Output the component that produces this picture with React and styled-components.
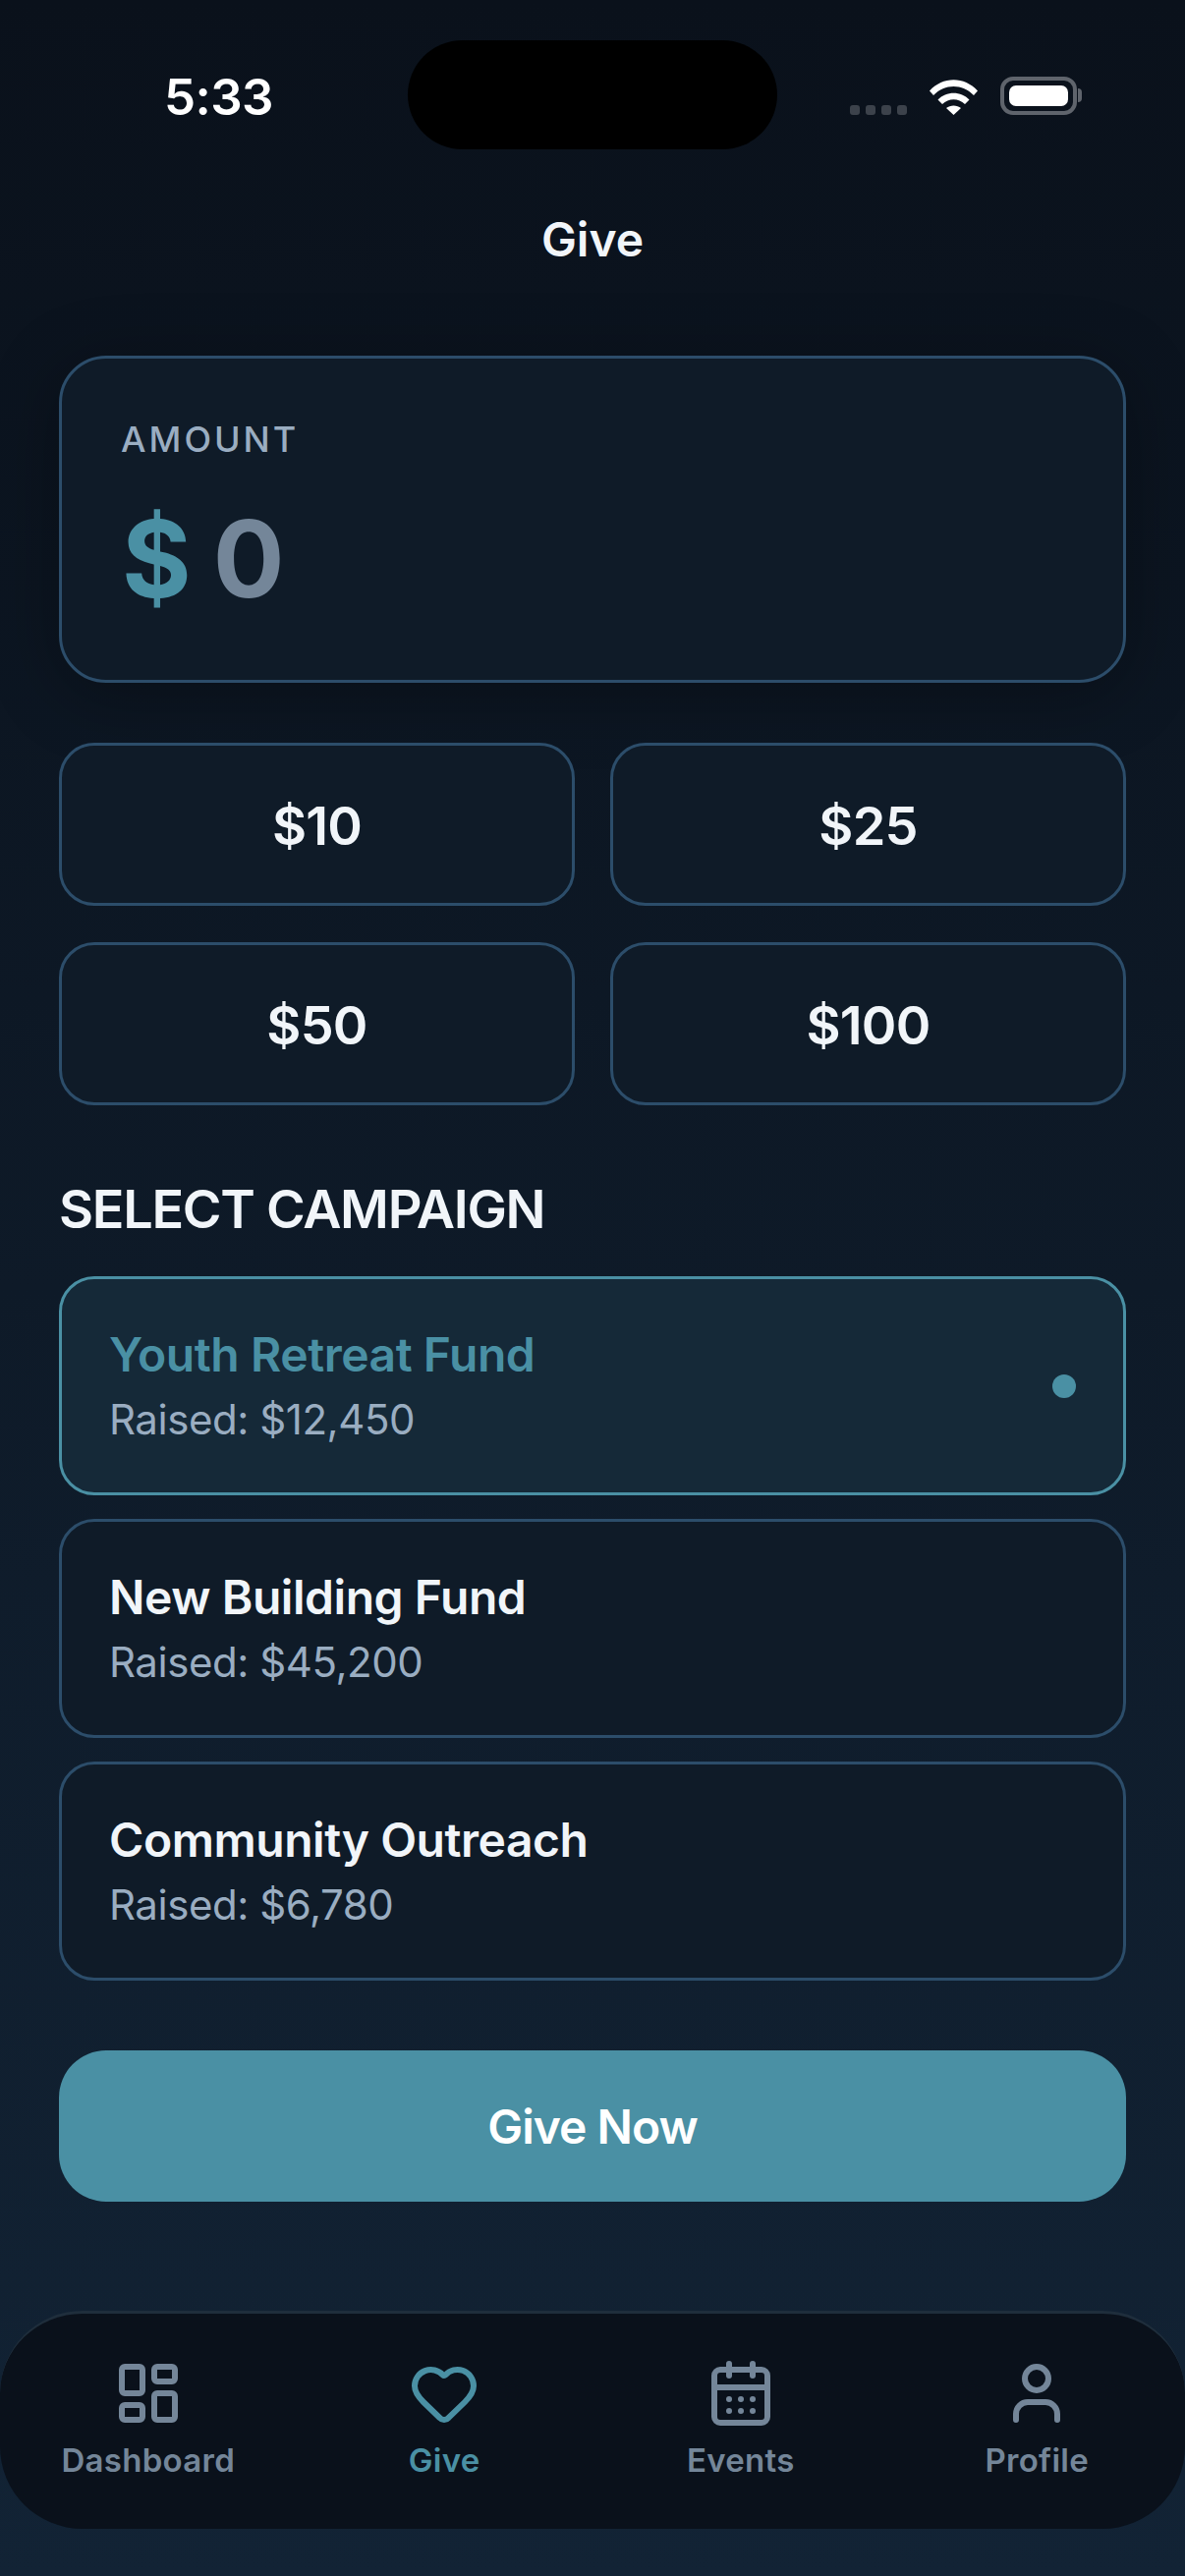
import React from "react";
import styled, { createGlobalStyle } from "styled-components";
import { LayoutDashboard, Heart, CalendarDays, User } from "lucide-react";

const GlobalStyle = createGlobalStyle`
  html, body {
    margin: 0;
    padding: 0;
    background: #0a111b;
  }
  * {
    box-sizing: border-box;
  }
`;

const Screen = styled.div`
  width: 1206px;
  height: 2622px;
  overflow: hidden;
  display: flex;
  flex-direction: column;
  background: linear-gradient(180deg, #0a111b 0%, #122335 100%);
  font-family: Inter, "Liberation Sans", sans-serif;
  color: #f1f5f9;
`;

const StatusBar = styled.div`
  height: 152px;
  padding: 41px 110px 0 167px;
  display: flex;
  align-items: flex-start;
`;

const Time = styled.div`
  width: 108px;
  margin-top: 30px;
  font-size: 51px;
  line-height: 56px;
  font-weight: 600;
  letter-spacing: -0.6px;
  color: #ffffff;
  white-space: nowrap;
`;

const Island = styled.div`
  width: 376px;
  height: 111px;
  margin-left: 140px;
  border-radius: 56px;
  background: #000000;
`;

const StatusIcons = styled.div`
  display: flex;
  align-items: flex-end;
  margin-top: 37px;
  margin-left: auto;
  height: 39px;
`;

const SignalDots = styled.div`
  display: flex;
  gap: 6px;
  margin-right: 22px;
`;

const SignalDot = styled.span`
  width: 10px;
  height: 10px;
  border-radius: 3px;
  background: #3c424b;
`;

const Battery = styled.div`
  position: relative;
  width: 78px;
  height: 39px;
  margin-left: 22px;
  padding: 5px;
  border: 4px solid #5f646c;
  border-radius: 13px;

  &::before {
    content: "";
    display: block;
    height: 100%;
    border-radius: 7px;
    background: #ffffff;
  }

  &::after {
    content: "";
    position: absolute;
    right: -9px;
    top: 8px;
    width: 4px;
    height: 14px;
    border-radius: 0 4px 4px 0;
    background: #5f646c;
  }
`;

const Title = styled.h1`
  margin: 62px 0 0;
  text-align: center;
  font-size: 48px;
  line-height: 60px;
  font-weight: 600;
  color: #f1f5f9;
`;

const Content = styled.div`
  flex: 1;
  padding: 88px 60px 0;
  display: flex;
  flex-direction: column;
`;

const AmountCard = styled.div`
  height: 333px;
  padding: 60px;
  border: 3px solid #2c4d6a;
  border-radius: 48px;
  background: #0f1b28;
  box-shadow: 0 12px 72px rgba(0, 0, 0, 0.3);
`;

const AmountLabel = styled.div`
  font-size: 36px;
  line-height: 44px;
  font-weight: 500;
  letter-spacing: 3px;
  color: #9aadc1;
`;

const AmountRow = styled.div`
  margin-top: 35px;
  display: flex;
  gap: 24px;
  font-size: 108px;
  line-height: 130px;
  font-weight: 700;
`;

const Currency = styled.span`
  margin-left: 1px;
  letter-spacing: -2px;
  color: #4a90a4;
`;

const AmountValue = styled.span`
  color: #748699;
`;

const QuickGrid = styled.div`
  margin-top: 61px;
  display: grid;
  grid-template-columns: 1fr 1fr;
  gap: 37px 36px;
`;

const QuickButton = styled.button`
  height: 166px;
  padding: 2px 0 0;
  border: 3px solid #2c4d6a;
  border-radius: 36px;
  background: #0f1b28;
  font-family: inherit;
  font-size: 54px;
  font-weight: 600;
  letter-spacing: -0.8px;
  color: #f1f5f9;
`;

const SectionTitle = styled.h2`
  margin: 76px 0 0;
  font-size: 54px;
  line-height: 60px;
  font-weight: 600;
  letter-spacing: -1.3px;
  color: #f1f5f9;
`;

const CampaignList = styled.div`
  margin-top: 38px;
  display: flex;
  flex-direction: column;
  gap: 24px;
`;

const CampaignCard = styled.div`
  height: 223px;
  padding: 0 48px;
  display: flex;
  align-items: center;
  justify-content: space-between;
  border: 3px solid ${(p) => (p.$active ? "#4a90a4" : "#2c4d6a")};
  border-radius: 36px;
  background: ${(p) => (p.$active ? "#152938" : "#0f1b28")};
`;

const CampaignName = styled.div`
  font-size: 48px;
  line-height: 58px;
  font-weight: 600;
  letter-spacing: -0.45px;
  color: ${(p) => (p.$active ? "#4a90a4" : "#f1f5f9")};
`;

const CampaignRaised = styled.div`
  margin-top: 11px;
  font-size: 42px;
  line-height: 52px;
  letter-spacing: -0.45px;
  color: #9aadc1;
`;

const ActiveDot = styled.span`
  width: 24px;
  height: 24px;
  border-radius: 50%;
  background: #4a90a4;
`;

const GiveButton = styled.button`
  height: 154px;
  margin-top: 71px;
  padding: 0;
  border: 0;
  border-radius: 48px;
  background: #4a90a4;
  font-family: inherit;
  font-size: 48px;
  font-weight: 600;
  letter-spacing: -1px;
  color: #ffffff;
`;

const BottomNav = styled.nav`
  height: 222px;
  margin-bottom: 48px;
  padding: 45px 0 0;
  display: grid;
  grid-template-columns: repeat(4, 1fr);
  align-items: start;
  background: #0a111b;
  border-top: 3px solid #1f2e3c;
  border-radius: 84px;
`;

const NavItem = styled.div`
  display: flex;
  flex-direction: column;
  align-items: center;
  gap: 12px;
  color: ${(p) => (p.$active ? "#4a90a4" : "#748699")};
  font-size: 33px;
  line-height: 40px;
  font-weight: 600;
  letter-spacing: 0.3px;
`;

const WifiIcon = () => (
  <svg width="51" height="38" viewBox="0 0 51 38" fill="none">
    <path d="M1 13.5C14.5 -1.5 36.5 -1.5 50 13.5L46 18C34.5 6 16.5 6 5 18Z" fill="#fff" />
    <path d="M9.5 22.5C18 13.5 33 13.5 41.5 22.5L37 27C30.5 20.5 20.5 20.5 14 27Z" fill="#fff" />
    <path d="M18 31C22 27.5 29 27.5 33 31L25.5 38Z" fill="#fff" />
  </svg>
);

const navItems = [
  { label: "Dashboard", Icon: LayoutDashboard },
  { label: "Give", Icon: Heart, active: true },
  { label: "Events", Icon: CalendarDays },
  { label: "Profile", Icon: User },
];

const campaigns = [
  { name: "Youth Retreat Fund", raised: "Raised: $12,450", active: true },
  { name: "New Building Fund", raised: "Raised: $45,200" },
  { name: "Community Outreach", raised: "Raised: $6,780" },
];

const App = () => {
  return (
    <Screen>
      <GlobalStyle />
      <StatusBar>
        <Time>5:33</Time>
        <Island />
        <StatusIcons>
          <SignalDots>
            <SignalDot />
            <SignalDot />
            <SignalDot />
            <SignalDot />
          </SignalDots>
          <WifiIcon />
          <Battery />
        </StatusIcons>
      </StatusBar>
      <Title>Give</Title>
      <Content>
        <AmountCard>
          <AmountLabel>AMOUNT</AmountLabel>
          <AmountRow>
            <Currency>$</Currency>
            <AmountValue>0</AmountValue>
          </AmountRow>
        </AmountCard>
        <QuickGrid>
          <QuickButton>$10</QuickButton>
          <QuickButton>$25</QuickButton>
          <QuickButton>$50</QuickButton>
          <QuickButton>$100</QuickButton>
        </QuickGrid>
        <SectionTitle>SELECT CAMPAIGN</SectionTitle>
        <CampaignList>
          {campaigns.map((c) => (
            <CampaignCard key={c.name} $active={c.active}>
              <div>
                <CampaignName $active={c.active}>{c.name}</CampaignName>
                <CampaignRaised>{c.raised}</CampaignRaised>
              </div>
              {c.active && <ActiveDot />}
            </CampaignCard>
          ))}
        </CampaignList>
        <GiveButton>Give Now</GiveButton>
      </Content>
      <BottomNav>
        {navItems.map(({ label, Icon, active }) => (
          <NavItem key={label} $active={active}>
            <Icon size={72} strokeWidth={2} />
            {label}
          </NavItem>
        ))}
      </BottomNav>
    </Screen>
  );
};

export default App;
